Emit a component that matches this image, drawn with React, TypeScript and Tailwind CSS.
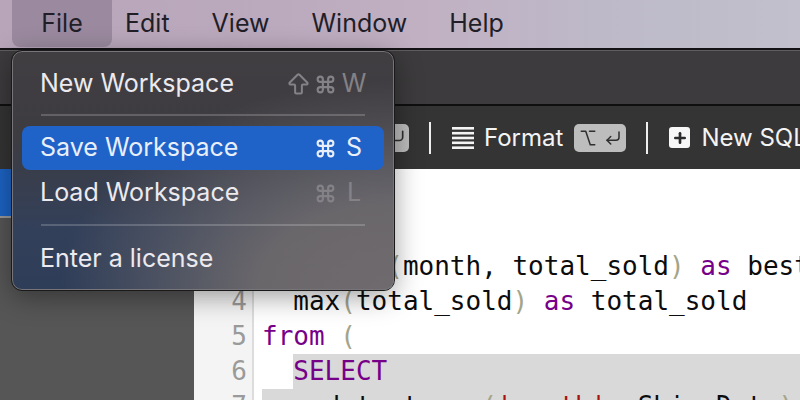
import { ArrowBigUp, Command, CornerDownLeft, Option, Plus } from 'lucide-react';

const menuNames = ['Edit', 'View', 'Window', 'Help'];

function MenuRow({ label, shortcut, shift, active }: { label: string; shortcut?: string; shift?: boolean; active?: boolean }) {
  return (
    <div className={`flex h-[44px] items-center rounded-lg pl-[18px] pr-[12px] text-[25px] ${active ? 'bg-[#1f63c9] text-[#e9effa]' : 'text-[#eceaee]'}`}>
      <span className="flex-1">{label}</span>
      {shortcut && (
        <div className={`flex items-center ${active ? 'text-[#e9effa]' : 'text-[#848286]'}`}>
          {shift && <ArrowBigUp className="mr-[3px] h-[27px] w-[27px]" strokeWidth={1.8} />}
          <Command className="h-[21px] w-[21px]" strokeWidth={2.4} />
          <span className="w-[36px] text-center">{shortcut}</span>
        </div>
      )}
    </div>
  );
}

function Separator() {
  return <div className="mx-[19px] h-[2px] bg-[#ffffff30]" />;
}

function KeyCap({ children, className }: { children: React.ReactNode; className?: string }) {
  return <div className={`flex h-[28px] shrink-0 items-center rounded-[5px] bg-[#bdbdbd] text-[#2f2f2f] ${className ?? ''}`}>{children}</div>;
}

function CodeLine({ n, children, className }: { n: number; children?: React.ReactNode; className?: string }) {
  return (
    <div className="flex h-[35px] items-center">
      <div className="w-[60px] shrink-0 self-stretch border-r-2 border-[#dcdcdc] bg-[#f4f4f4] pr-[5px] text-right leading-[35px] text-[#9a9a9a]">{n}</div>
      <div className={`ml-[8px] flex-1 self-stretch whitespace-pre leading-[35px] text-[#0c0c0c] ${className ?? ''}`}>{children}</div>
    </div>
  );
}

const Kw = ({ children }: { children: React.ReactNode }) => <span className="text-[#770088]">{children}</span>;
const Paren = ({ children }: { children: React.ReactNode }) => <span className="text-[#a4a48a]">{children}</span>;
const Str = ({ children }: { children: React.ReactNode }) => <span className="text-[#aa1111]">{children}</span>;

export default function App() {
  return (
    <div className="relative flex h-[400px] w-[800px] flex-col overflow-hidden bg-[#555555] font-['Inter',sans-serif]">
      {/* Menu bar */}
      <div className="flex h-[48px] shrink-0 items-center bg-[linear-gradient(90deg,#b8a5ba_0%,#bba9bd_35%,#c1b0c2_52%,#bdb9c9_75%,#c2c0cc_100%)] pl-[12px] text-[25px] text-[#211e28]">
        <div className="flex h-[47px] w-[100px] items-center justify-center self-start rounded-b-lg bg-[#9b8a9f]">File</div>
        <div className="ml-[13px] flex gap-[42px]">
          {menuNames.map((name) => (
            <span key={name}>{name}</span>
          ))}
        </div>
      </div>
      <div className="h-[3px] shrink-0 border-t-2 border-[#141214] bg-[#5f5d5f]" />

      {/* Title bar */}
      <div className="h-[55px] shrink-0 border-b-2 border-[#0f0f0f] bg-[#3d3b3d]" />

      {/* Toolbar */}
      <div className="flex h-[63px] shrink-0 items-center overflow-hidden whitespace-nowrap bg-[#343434] pl-[366px] text-[24px] text-[#f4f4f4]">
        <KeyCap className="w-[43px] justify-end pr-[3px]">
          <CornerDownLeft className="h-[20px] w-[20px]" strokeWidth={2} />
        </KeyCap>
        <div className="ml-[20px] h-[32px] w-[2px] shrink-0 bg-[#eeeeee]" />
        <svg className="ml-[21px] h-[22px] w-[22px] shrink-0" viewBox="0 0 22 22" fill="#f4f4f4">
          <rect y="0" width="22" height="2.6" />
          <rect y="4.9" width="22" height="2.6" />
          <rect y="9.7" width="22" height="2.6" />
          <rect y="14.5" width="22" height="2.6" />
          <rect y="19.4" width="22" height="2.6" />
        </svg>
        <span className="ml-[10px] shrink-0">Format</span>
        <KeyCap className="ml-[11px] w-[52px] justify-center gap-[7px]">
          <Option className="h-[18px] w-[18px]" strokeWidth={2} />
          <CornerDownLeft className="h-[18px] w-[18px]" strokeWidth={2} />
        </KeyCap>
        <div className="ml-[20px] h-[32px] w-[2px] shrink-0 bg-[#eeeeee]" />
        <div className="ml-[21px] flex h-[21px] w-[21px] shrink-0 items-center justify-center rounded-[3px] bg-[#f7f7f7]">
          <Plus className="h-[16px] w-[16px] text-[#2b2b2b]" strokeWidth={4} />
        </div>
        <span className="ml-[11px] shrink-0">New SQL Console</span>
      </div>

      {/* Sidebar + editor */}
      <div className="flex min-h-0 flex-1">
        <div className="w-[194px] shrink-0 bg-[#565656]">
          <div className="h-[47px] bg-[#1c63c4]" />
          <div className="h-[2px] bg-[#9a9a9a]" />
        </div>
        <div className="min-w-0 flex-1 overflow-hidden bg-white pt-[10px] font-['DejaVu_Sans_Mono',monospace] text-[26px]">
          <CodeLine n={1} />
          <CodeLine n={2} />
          <CodeLine n={3}>
            {'  max_by'}<Paren>(</Paren>month, total_sold<Paren>)</Paren> <Kw>as</Kw> best_month
          </CodeLine>
          <CodeLine n={4}>
            {'  max'}<Paren>(</Paren>total_sold<Paren>)</Paren> <Kw>as</Kw> total_sold
          </CodeLine>
          <CodeLine n={5}>
            <Kw>from</Kw> <Paren>(</Paren>
          </CodeLine>
          <CodeLine n={6}>
            {'  '}
            <span className="inline-block h-[35px] w-full bg-[#d9d9d9] align-top"><Kw>SELECT</Kw></span>
          </CodeLine>
          <CodeLine n={7} className="bg-[#d9d9d9]">
            {'    date_trunc'}<Paren>(</Paren><Str>'month'</Str>, Ship_Date<Paren>)</Paren>
          </CodeLine>
        </div>
      </div>

      {/* File menu dropdown */}
      <div className="absolute left-[12px] top-[51px] h-[239px] w-[382px] rounded-[10px] border border-[#77757a] bg-[radial-gradient(ellipse_at_100%_100%,#6f6a6e_0%,#6a676b_25%,#ffffff00_62%),linear-gradient(180deg,#413e42_0%,#3d3c41_35%,#33405a_75%,#2e3d58_100%)] px-[9px] pt-[10px] shadow-[0_6px_28px_rgba(0,0,0,0.4)] outline outline-1 outline-[#1a1a1a]">
        <MenuRow label="New Workspace" shortcut="W" shift />
        <div className="mt-[8px]"><Separator /></div>
        <div className="mt-[10px]"><MenuRow label="Save Workspace" shortcut="S" active /></div>
        <div className="mt-[1px]"><MenuRow label="Load Workspace" shortcut="L" /></div>
        <div className="mt-[9px]"><Separator /></div>
        <div className="mt-[11px]"><MenuRow label="Enter a license" /></div>
      </div>
    </div>
  );
}
